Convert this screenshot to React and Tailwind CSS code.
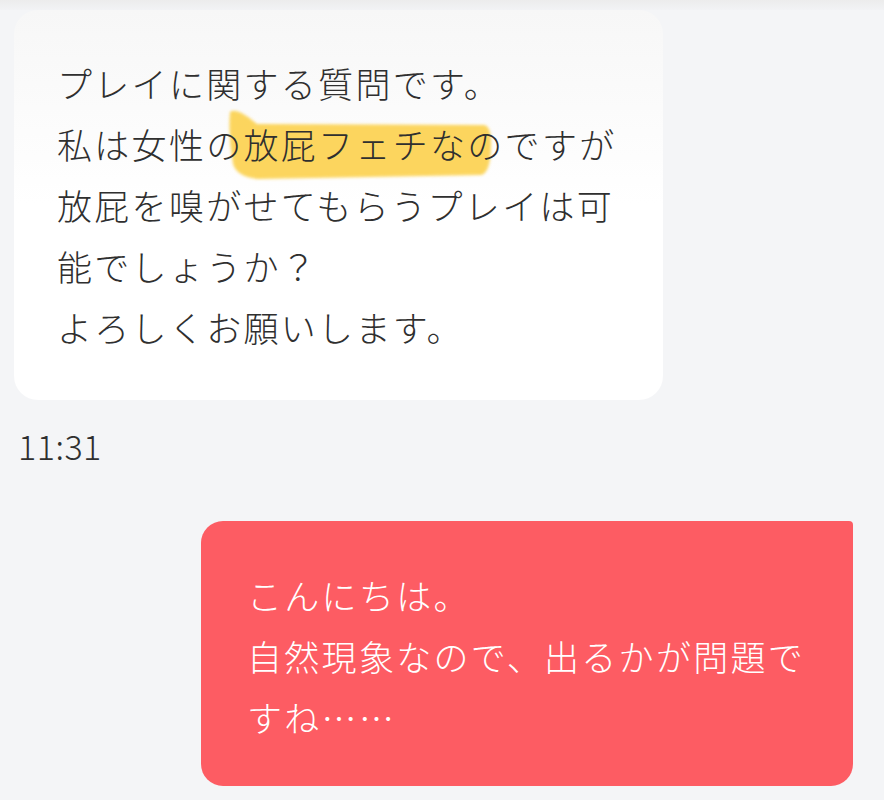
export default function App() {
  const font = { fontFamily: '"Noto Sans CJK JP", "Noto Sans", sans-serif' };
  return (
    <div
      className="w-[884px] h-[800px] overflow-hidden bg-[#f4f5f7] flex flex-col"
      style={font}
    >
      <div className="h-[10px] bg-gradient-to-b from-[#ececec] to-[#f2f3f5]" />
      <div className="relative ml-[14px] w-[649px] rounded-[24px] bg-gradient-to-b from-[#f7f7f7] via-white to-white px-[43px] pt-[42px] pb-[43px] text-[35px] font-light leading-[61px] tracking-[2.3px] text-[#2f2f2f]">
        <svg
          className="absolute left-[212px] top-[98px]"
          width="268"
          height="74"
          viewBox="0 0 268 74"
        >
          <defs>
            <filter id="soft" x="-10%" y="-10%" width="120%" height="120%">
              <feGaussianBlur stdDeviation="1.4" />
            </filter>
          </defs>
          <path
            d="M4,4 C9,0 19,6 31,16 L258,17 Q266,18 265,41 Q264,65 255,67 L32,71 Q11,69 7,56 Q2,30 4,4 Z"
            fill="#fcd048"
            opacity="0.88"
            filter="url(#soft)"
          />
        </svg>
        <div className="relative whitespace-nowrap">
          <div>プレイに関する質問です。</div>
          <div>私は女性の放屁フェチなのですが</div>
          <div>放屁を嗅がせてもらうプレイは可</div>
          <div>能でしょうか？</div>
          <div>よろしくお願いします。</div>
        </div>
      </div>
      <div className="ml-[18px] mt-[26px] h-[40px] text-[34px] font-light leading-[40px] tracking-[0.5px] text-[#2f2f2f]">
        11:31
      </div>
      <div className="ml-[201px] mt-[55px] w-[652px] rounded-[22px] rounded-tr-[4px] bg-[#fd5c63] px-[46px] pt-[43px] pb-[39px] text-[35px] font-light leading-[61px] tracking-[2.3px] text-white whitespace-nowrap">
        <div>こんにちは。</div>
        <div>自然現象なので、出るかが問題で</div>
        <div>すね……</div>
      </div>
    </div>
  );
}
